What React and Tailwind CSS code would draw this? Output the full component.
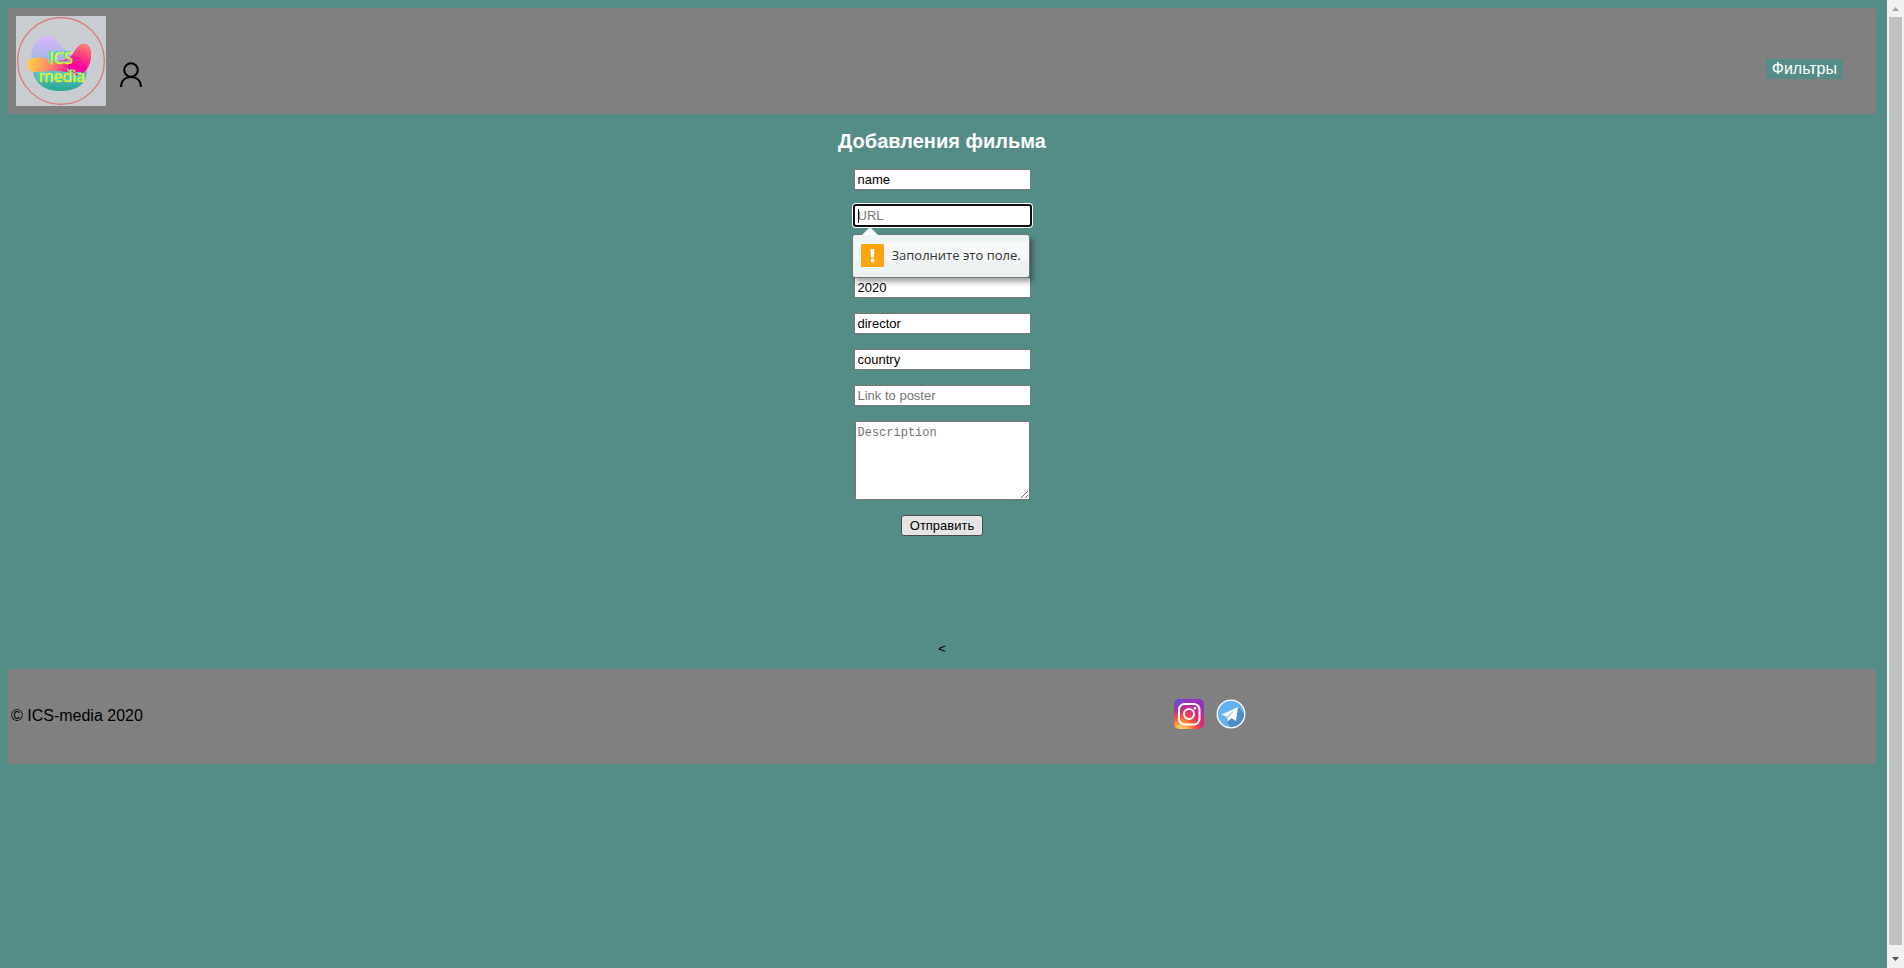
import React from 'react'

function Logo() {
  return (
    <svg viewBox="0 0 90 90" className="size-[90px]" role="img" aria-label="ICS media">
      <defs>
        <linearGradient id="violet" x1="0" y1="0" x2="0" y2="1">
          <stop offset="0" stopColor="#d9b5ff" />
          <stop offset="1" stopColor="#94b8d8" />
        </linearGradient>
        <linearGradient id="teal" x1="0" y1="0" x2="0" y2="1">
          <stop offset="0" stopColor="#86b9d8" />
          <stop offset="1" stopColor="#22ab92" />
        </linearGradient>
        <linearGradient id="pink" gradientUnits="userSpaceOnUse" x1="11" y1="44" x2="62" y2="56">
          <stop offset="0" stopColor="#ffd53f" />
          <stop offset="0.5" stopColor="#ff7b6e" />
          <stop offset="0.9" stopColor="#ff009c" />
        </linearGradient>
        <linearGradient id="tip" gradientUnits="userSpaceOnUse" x1="68" y1="28" x2="60" y2="50">
          <stop offset="0" stopColor="#ff806c" />
          <stop offset="1" stopColor="#ff009c" />
        </linearGradient>
      </defs>
      <rect width="90" height="90" fill="#c9ccd0" />
      <circle cx="45" cy="45" r="43.4" fill="none" stroke="#d8756c" strokeWidth="1.2" />
      <path d="M15 44C15 32 22 19 33 20C43 21 41 31 54 36L62 50H15Z" fill="url(#violet)" />
      <path d="M16 52C24 47 60 47 71 53C71 62 68 75 44 75C27 75 18 66 16 52Z" fill="url(#teal)" />
      <path d="M11 49C10 43 17 40 27 42C40 46 50 46 57 38C61 31 64 28 68 28C73 28 75 33 75 39C75 50 68 60 59 59C50 57 43 53 32 55C20 57 12 57 11 49Z" fill="url(#pink)" />
      <path d="M57 38C61 31 64 28 68 28C73 28 75 33 75 39C75 50 68 60 59 59C55 58 52 57 49 56C54 50 55 43 57 38Z" fill="url(#tip)" />
      <g
        fontFamily="'Open Sans', sans-serif"
        fontSize="16"
        textAnchor="middle"
        fill="#e6f41c"
        stroke="#e6f41c"
        strokeWidth="0.5"
        className="[text-shadow:-2px_-1px_0_#45d6cf]"
      >
        <text x="45" y="48">ICS</text>
        <text x="46" y="66">media</text>
      </g>
    </svg>
  )
}

function UserIcon() {
  return (
    <svg viewBox="0 0 22 25" className="h-[25px] w-[22px]" fill="none" stroke="#000" strokeWidth="2" aria-hidden="true">
      <circle cx="11" cy="8" r="6.8" />
      <path d="M1 25C1.2 18.500 5.500 15 11 15S20.800 18.500 21 25" />
    </svg>
  )
}

function InstagramIcon() {
  return (
    <svg viewBox="0 0 30 30" className="size-[30px]" aria-hidden="true">
      <defs>
        <radialGradient id="warm" cx="0.25" cy="1.05" r="1.05">
          <stop offset="0" stopColor="#ffdc80" />
          <stop offset="0.2" stopColor="#fcaf45" />
          <stop offset="0.45" stopColor="#f3503f" />
          <stop offset="0.7" stopColor="#d62976" />
          <stop offset="1" stopColor="#962fbf" />
        </radialGradient>
        <radialGradient id="cool" cx="0" cy="0" r="0.6">
          <stop offset="0" stopColor="#4660d8" />
          <stop offset="1" stopColor="#7a3fd0" stopOpacity="0" />
        </radialGradient>
      </defs>
      <rect width="30" height="30" rx="5" fill="url(#warm)" />
      <rect width="30" height="30" rx="5" fill="url(#cool)" />
      <g fill="none" stroke="#fff" strokeWidth="2">
        <rect x="5" y="5" width="20.500" height="20.500" rx="5.500" />
        <circle cx="15" cy="15" r="5" />
      </g>
      <circle cx="21" cy="9.300" r="1.400" fill="#fff" />
    </svg>
  )
}

function TelegramIcon() {
  return (
    <svg viewBox="0 0 30 30" className="size-[30px]" aria-hidden="true">
      <circle cx="15" cy="15" r="13.800" fill="#63b1f0" />
      <path d="M22 8L28.500 15C28 23 22 28.500 15 28.800L10.500 22Z" fill="#4b8fc6" />
      <circle cx="15" cy="15" r="13.800" fill="none" stroke="#fff" strokeWidth="1.300" />
      <path d="M5.500 15.800L22 8L20 22L15.500 19.300L11.500 22.500L10.300 17.500Z" fill="#fff" />
      <path d="M10.300 17.500L20 10L12.300 18.500L11.500 22.500Z" fill="#a9c9e6" />
    </svg>
  )
}

const field =
  'block h-[21px] w-[177px] border border-[#767676] bg-white px-[3px] text-[13px] text-black placeholder:text-[#757575]'

function ValidationTip() {
  return (
    <div role="alert" className="absolute top-[29px] -left-[2px] z-10 flex h-11 w-[178px] items-center gap-2 rounded-[3px] border border-[#6f7779] bg-linear-to-b from-[#f7f9fb]/95 to-[#f4f6f6]/95 pb-[2px] pl-2 font-['Open_Sans','Noto_Sans',sans-serif] text-[13px] text-[#333] shadow-[3px_4px_5px_rgba(0,0,0,0.35)]">
      <svg viewBox="0 0 16 9" className="absolute -top-[9px] left-[9px] h-[9px] w-4" aria-hidden="true">
        <path d="M0 9L8 1L16 9Z" fill="#f7f9fb" />
      </svg>
      <svg viewBox="0 0 23 23" className="size-[23px] shrink-0" aria-hidden="true">
        <rect width="23" height="23" rx="1" fill="#ffa30f" />
        <path d="M9.500 5H13.500L13 13.500H10Z" fill="#fff" />
        <circle cx="11.500" cy="16.500" r="1.900" fill="#fff" />
      </svg>
      <span className="pt-[2px] whitespace-nowrap">Заполните это поле.</span>
    </div>
  )
}

function FilmForm() {
  return (
    <form className="flex flex-col items-center gap-[15px]">
      <input aria-label="Name" defaultValue="name" className={field} />
      <div className="relative">
        <input
          aria-label="URL"
          placeholder="URL"
          required
          className={`${field} rounded-[2px] ring-2 ring-white outline-2 -outline-offset-1 outline-[#101010] outline-solid`}
        />
        <span className="absolute top-1 left-1 h-[14px] w-px bg-black" />
        <ValidationTip />
      </div>
      <input aria-label="Genre" defaultValue="genre" className={field} />
      <input aria-label="Year" defaultValue="2020" className={field} />
      <input aria-label="Director" defaultValue="director" className={field} />
      <input aria-label="Country" defaultValue="country" className={field} />
      <input aria-label="Link to poster" placeholder="Link to poster" className={field} />
      <textarea
        aria-label="Description"
        placeholder="Description"
        className="block h-[79px] w-[175px] resize border border-[#767676] bg-white px-[2px] py-[3px] font-['Liberation_Mono',monospace] text-[12px] leading-4 placeholder:text-[#757575]"
      />
      <button type="button" className="h-[21px] rounded-[3px] border border-[#4a4a4a] bg-[#e5e5e5] px-2 text-[13px] leading-[19px] text-black">
        Отправить
      </button>
    </form>
  )
}

function ScrollBar() {
  return (
    <div aria-hidden="true" className="flex w-[17px] shrink-0 flex-col items-center bg-[#f1f1f1]">
      <svg viewBox="0 0 17 17" className="size-[17px]">
        <path d="M5 11L8.500 7L12 11Z" fill="#a3a3a3" />
      </svg>
      <div className="w-[13px] flex-1 bg-[#c1c1c1]" />
      <svg viewBox="0 0 17 23" className="h-[23px] w-[17px]">
        <path d="M5 12L8.500 16L12 12Z" fill="#505050" />
      </svg>
    </div>
  )
}

export default function App() {
  return (
    <div className="flex min-h-screen bg-[#548c87] font-['Liberation_Sans',Arial,sans-serif] text-base text-black">
      <div className="min-w-0 flex-1 pt-2 pr-[11px] pl-2">
        <header className="flex justify-between rounded-[2px] bg-[#808080] p-2">
          <div className="flex items-end gap-[14px]">
            <a href="#home"><Logo /></a>
            <a href="#profile" aria-label="Profile" className="pb-[19px]"><UserIcon /></a>
          </div>
          <button type="button" className="mt-[43px] mr-[25px] h-5 self-start bg-[#548c87] px-[6px] text-base leading-5 text-white">
            Фильтры
          </button>
        </header>

        <main className="flex flex-col items-center pt-4">
          <h1 className="mb-4 text-xl leading-[23px] font-bold text-white">Добавления фильма</h1>
          <FilmForm />
          <p className="mt-[104px] mb-[11px] text-[13px] leading-[18px]">&lt;</p>
        </main>

        <footer className="grid grid-cols-[5fr_3fr] items-center rounded-[2px] bg-[#808080] py-[30px]">
          <p className="pb-[2px] pl-[3px] leading-[33px]">© ICS-media 2020</p>
          <div className="-ml-[2px] flex gap-3 pb-[5px]">
            <a href="#instagram" aria-label="Instagram"><InstagramIcon /></a>
            <a href="#telegram" aria-label="Telegram"><TelegramIcon /></a>
          </div>
        </footer>
      </div>
      <ScrollBar />
    </div>
  )
}
